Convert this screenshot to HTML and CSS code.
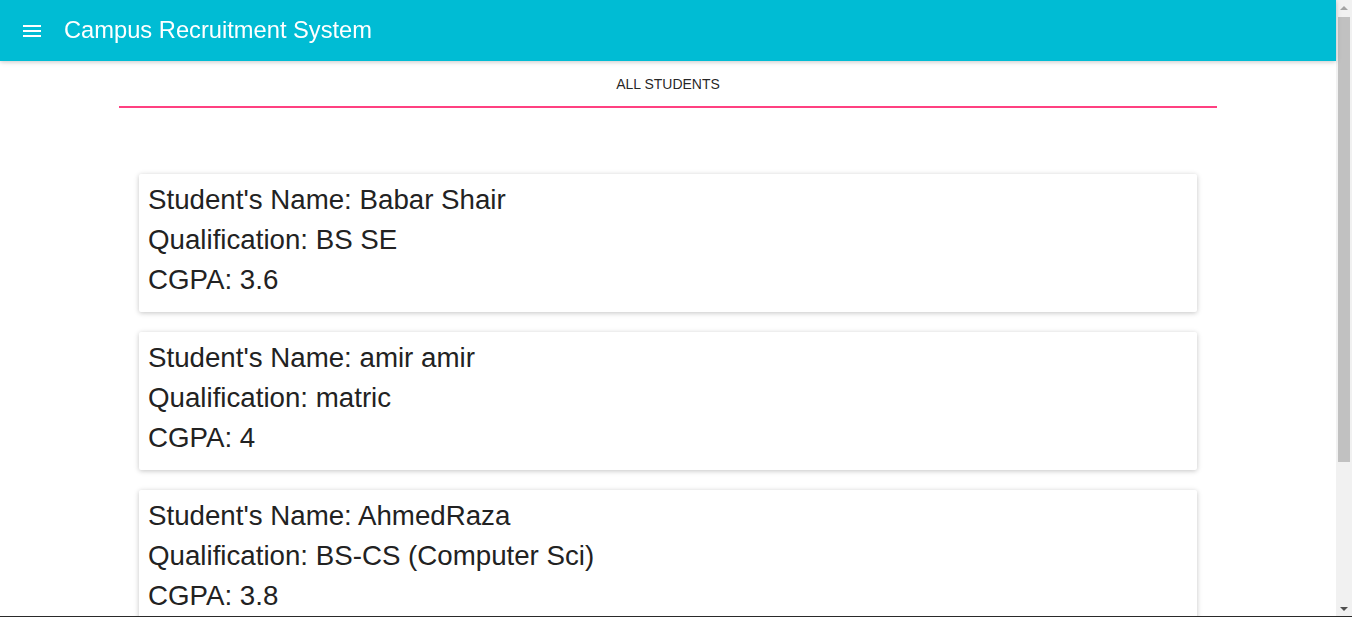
FILE: index.html
```html
<!DOCTYPE html>
<html>
<head>
<meta charset="utf-8">
<link rel="stylesheet" href="styles.css">
</head>
<body>
<div class="page">
  <header class="appbar">
    <button class="menu" aria-label="menu">
      <svg width="24" height="24" viewBox="0 0 24 24"><path d="M3 18h18v-2H3v2zm0-5h18v-2H3v2zm0-7v2h18V6H3z" fill="#fff"/></svg>
    </button>
    <h1 class="title">Campus Recruitment System</h1>
  </header>
  <main class="content">
    <div class="tabs">
      <div class="tab">ALL STUDENTS</div>
      <div class="ink"></div>
    </div>
    <div class="list">
      <div class="card">
        <p>Student's Name: Babar Shair</p>
        <p>Qualification: BS SE</p>
        <p>CGPA: 3.6</p>
      </div>
      <div class="card">
        <p>Student's Name: amir amir</p>
        <p>Qualification: matric</p>
        <p>CGPA: 4</p>
      </div>
      <div class="card">
        <p>Student's Name: AhmedRaza</p>
        <p>Qualification: BS-CS (Computer Sci)</p>
        <p>CGPA: 3.8</p>
      </div>
    </div>
  </main>
</div>
<div class="scrollbar">
  <div class="arrow up"></div>
  <div class="thumb"></div>
  <div class="arrow down"></div>
</div>
<div class="bottomline"></div>
</body>
</html>
```
FILE: styles.css
```css
html, body {
  margin: 0;
  padding: 0;
  height: 100%;
  overflow: hidden;
  background: #fff;
}
body {
  font-family: "Liberation Sans", Arial, sans-serif;
  color: rgba(0,0,0,0.87);
}
.page {
  width: 1336px;
}
.appbar {
  height: 61px;
  background: #00bcd4;
  display: flex;
  align-items: center;
  padding-left: 20px;
  box-shadow: 0 1px 6px rgba(0,0,0,0.12), 0 1px 4px rgba(0,0,0,0.12);
  position: relative;
  z-index: 1;
}
.menu {
  background: none;
  border: 0;
  padding: 0;
  width: 24px;
  height: 24px;
  margin-top: 1px;
  display: flex;
}
.title {
  margin: 0 0 1px 20px;
  color: #fff;
  font-size: 23.7px;
  font-weight: normal;
  line-height: 60px;
}
.content {
  display: flex;
  flex-direction: column;
  align-items: center;
}
.tabs {
  width: 1098px;
  display: flex;
  flex-direction: column;
}
.tab {
  height: 45px;
  display: flex;
  align-items: center;
  justify-content: center;
  font-size: 14px;
  padding-top: 1px;
  box-sizing: border-box;
  color: rgba(0,0,0,0.87);
}
.ink {
  height: 2px;
  background: #ff4081;
}
.list {
  width: 1058px;
  margin-top: 66px;
  display: flex;
  flex-direction: column;
  gap: 20px;
}
.card {
  background: #fff;
  border-radius: 2px;
  box-shadow: 0 1px 6px rgba(0,0,0,0.12), 0 1px 4px rgba(0,0,0,0.12);
  padding: 6px 9px 12px;
}
.card p {
  margin: 0;
  font-size: 27.7px;
  line-height: 40px;
  color: #222;
}
.scrollbar {
  position: fixed;
  top: 0;
  right: 0;
  width: 16px;
  height: 617px;
  background: #f1f1f1;
}
.thumb {
  position: absolute;
  left: 2px;
  top: 17px;
  width: 12px;
  height: 445px;
  background: #c1c1c1;
}
.arrow {
  position: absolute;
  left: 4px;
  width: 0;
  height: 0;
  border-left: 4px solid transparent;
  border-right: 4px solid transparent;
}
.arrow.up {
  top: 6px;
  border-bottom: 4px solid #a3a3a3;
}
.arrow.down {
  bottom: 6px;
  border-top: 4px solid #505050;
}
.bottomline {
  position: fixed;
  left: 0;
  right: 0;
  bottom: 0;
  height: 1px;
  background: #2a2a2a;
}
```
